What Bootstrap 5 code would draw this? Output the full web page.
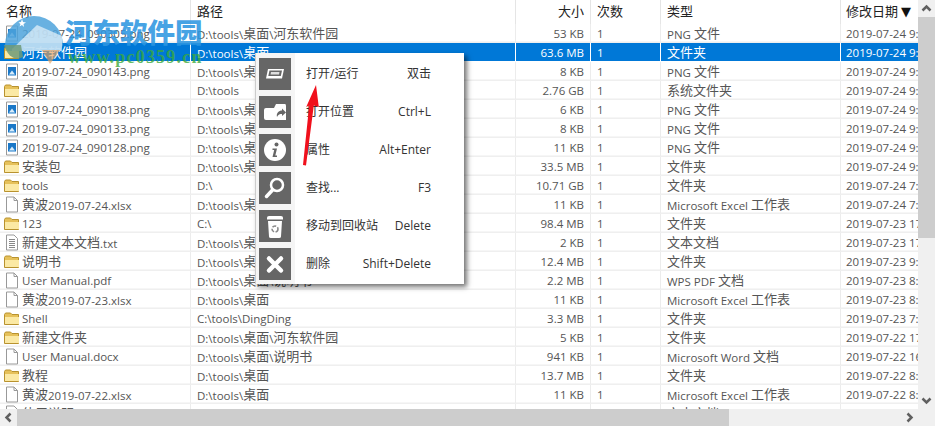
<!DOCTYPE html>
<html lang="zh-Hans">
<head>
<meta charset="UTF-8">
<title>Everything</title>
<link href="https://cdn.jsdelivr.net/npm/bootstrap@5.3.3/dist/css/bootstrap.min.css" rel="stylesheet">
<style>
  html, body { height: 100%; overflow: hidden; }
  body { background: #fff; color: #555; font: 11.5px/19px "Open Sans", "Noto Sans CJK SC", sans-serif; }
  .cjk-run { font-size: 13px; font-family: "Noto Sans CJK SC", sans-serif; }
  .data-row .cjk-run { position: relative; top: -1px; }
  .app-shell { width: 935px; height: 426px; position: relative; overflow: hidden; }
  .list-pane { width: 918px; height: 409px; overflow: hidden; }
  .cell { flex: none; padding-left: 6px; white-space: nowrap; overflow: hidden; border-right: 1px solid #ececec; }
  .c-name { width: 191px; padding-left: 22px; position: relative; }
  .c-path { width: 325px; }
  .c-size { width: 75px; padding: 0 6px 0 0; text-align: right; }
  .c-count { width: 70px; }
  .c-type { width: 180px; }
  .c-date { width: 77px; padding-left: 5px; border-right: 0; }
  .head-row { height: 24px; color: #222; line-height: 22px; }
  .head-row .cell { height: 24px; border-right-color: #e5e5e5; }
  .head-row .c-name { padding-left: 6px; }
  .head-row .c-date { padding-left: 5px; }
  .sort-mark { font: 13px "DejaVu Sans", sans-serif; color: #111; margin-left: 3px; }
  .data-row { height: 19px; border-bottom: 1px solid #efefef; box-shadow: inset 0 -1px 0 #f6f6f6; }
  .data-row .cell { height: 18px; }
  .data-row.picked { background: #0078d7; color: #fff; border-bottom-color: #fff; box-shadow: none; }
  .data-row.picked .cell { border-right-color: #fff; }
  .file-ico { position: absolute; left: 4px; top: 1px; width: 16px; height: 17px; }
  .bar-v { position: absolute; left: 918px; top: 0; width: 17px; height: 409px; background: #f0f0f0; }
  .thumb-v { position: absolute; left: 0; top: 17px; width: 17px; height: 221px; background: #cdcdcd; }
  .bar-h { position: absolute; left: 0; top: 409px; width: 935px; height: 17px; background: #f0f0f0; }
  .thumb-h { position: absolute; left: 17px; top: 0; width: 712px; height: 17px; background: #cdcdcd; }
  .arrow-ico { position: absolute; width: 17px; height: 17px; }
  .ctx-menu { position: absolute; left: 255px; top: 53px; width: 209px; height: 231px; background: #fff; box-shadow: 3px 3px 5px rgba(0,0,0,.55); border-left: 1px solid #ccc; color: #333; font: 12px/18px "Open Sans", "Noto Sans CJK SC", sans-serif; padding: 5px 0 0 3px; }
  .ctx-strip { position: absolute; left: 0; top: 0; width: 39px; height: 100%; background: #f5f5f5; }
  .ctx-item { height: 38px; position: relative; }
  .ctx-tile { flex: none; width: 32px; height: 32px; background: #666; margin-right: 15px; position: relative; }
  .ctx-label { flex: 1 1 auto; margin-top: 7px; position: relative; }
  .ctx-key { padding-right: 33px; margin-top: 7px; position: relative; }
  .red-arrow { position: absolute; left: 296px; top: 84px; width: 30px; height: 84px; }
  .wm-logo { position: absolute; left: 0; top: 5px; width: 70px; height: 60px; }
  .wm-title { position: absolute; left: 65px; top: 13px; font: 900 27.5px/36px "Noto Sans CJK SC", sans-serif; color: rgba(45,150,225,.88); }
  .wm-url { position: absolute; left: 68px; top: 47px; font: bold 18px/20px "Liberation Serif", serif; letter-spacing: 1.2px; color: rgba(60,170,60,.8); }
</style>
</head>
<body>
<div class="app-shell">
  <div class="list-pane" id="rows">
    <div class="d-flex head-row">
      <div class="cell c-name"><span class="cjk-run">名称</span></div>
      <div class="cell c-path"><span class="cjk-run">路径</span></div>
      <div class="cell c-size"><span class="cjk-run">大小</span></div>
      <div class="cell c-count"><span class="cjk-run">次数</span></div>
      <div class="cell c-type"><span class="cjk-run">类型</span></div>
      <div class="cell c-date"><span class="cjk-run">修改日期</span><span class="sort-mark">▼</span></div>
    </div>
  </div>

  <div class="bar-v">
    <div class="thumb-v"></div>
    <svg class="arrow-ico" style="left:0;top:0" viewBox="0 0 17 17"><path d="M4.5 10.500 8.500 6.500 12.500 10.500" fill="none" stroke="#606060" stroke-width="2.500"/></svg>
    <svg class="arrow-ico" style="left:0;top:392px" viewBox="0 0 17 17"><path d="M4.500 6.500 8.500 10.500 12.500 6.500" fill="none" stroke="#606060" stroke-width="2.500"/></svg>
  </div>
  <div class="bar-h">
    <svg class="arrow-ico" style="left:0;top:0" viewBox="0 0 17 17"><path d="M10.500 4.500 6.500 8.500 10.500 12.500" fill="none" stroke="#606060" stroke-width="2.500"/></svg>
    <div class="thumb-h"></div>
    <svg class="arrow-ico" style="left:901px;top:0" viewBox="0 0 17 17"><path d="M6.500 4.500 10.500 8.500 6.500 12.500" fill="none" stroke="#606060" stroke-width="2.500"/></svg>
  </div>

  <div class="ctx-menu">
    <div class="ctx-strip"></div>
    <div class="ctx-item d-flex">
      <svg class="ctx-tile" viewBox="0 0 32 32"><path d="M9 11H25L23 20.500H7Z" fill="#fff"/><path d="M10.500 12.500H23L21.800 18H9.300Z" fill="#666"/><path d="M12 14H20.500L20 16.500H11.500Z" fill="#ddd"/></svg>
      <span class="ctx-label">打开/运行</span><span class="ctx-key">双击</span>
    </div>
    <div class="ctx-item d-flex">
      <svg class="ctx-tile" viewBox="0 0 32 32"><path d="M5 14Q5 12 7 12H15L17 8H26Q27 8 27 10V24H7Q5 24 5 22Z" fill="#fff"/><path d="M18 21C17 17 20 14.500 23 14.500V12.500L27 16.500 23 20V18C21 18 19 18.500 18 21Z" fill="#666"/></svg>
      <span class="ctx-label">打开位置</span><span class="ctx-key">Ctrl+L</span>
    </div>
    <div class="ctx-item d-flex">
      <svg class="ctx-tile" viewBox="0 0 32 32"><circle cx="16" cy="16" r="11" fill="#fff"/><circle cx="17.500" cy="10.500" r="2" fill="#666"/><path d="M13.500 14.500H18L16.300 21.500H18V23H13.500L15.200 16H13.500Z" fill="#666"/></svg>
      <span class="ctx-label">属性</span><span class="ctx-key">Alt+Enter</span>
    </div>
    <div class="ctx-item d-flex">
      <svg class="ctx-tile" viewBox="0 0 32 32"><circle cx="18" cy="13" r="6" fill="none" stroke="#fff" stroke-width="2.500"/><path d="M13.500 18 7.500 24.500" stroke="#fff" stroke-width="3.500" stroke-linecap="round"/></svg>
      <span class="ctx-label">查找...</span><span class="ctx-key">F3</span>
    </div>
    <div class="ctx-item d-flex">
      <svg class="ctx-tile" viewBox="0 0 32 32"><path d="M8 7.500Q8 6 10 6H22Q24 6 24 7.500V9.500H8Z" fill="#fff"/><path d="M9 11H23L22 26.500Q22 28 20 28H12Q10 28 10 26.500Z" fill="#fff"/><circle cx="16" cy="19" r="3" fill="none" stroke="#888" stroke-width="1.500" stroke-dasharray="4 1.500"/></svg>
      <span class="ctx-label">移动到回收站</span><span class="ctx-key">Delete</span>
    </div>
    <div class="ctx-item d-flex">
      <svg class="ctx-tile" viewBox="0 0 32 32"><path d="M10 10.500 22 22.500M22 10.500 10 22.500" stroke="#fff" stroke-width="4.500" stroke-linecap="round"/></svg>
      <span class="ctx-label">删除</span><span class="ctx-key">Shift+Delete</span>
    </div>
  </div>

  <svg class="red-arrow" viewBox="0 0 30 84"><path d="M20 1 22.800 23 17.800 21.500 10 81.500 7 81 13.200 21.500 10.200 23Z" fill="#f0101c"/></svg>

  <svg class="wm-logo" viewBox="0 0 70 60">
    <path d="M5 40A29 29 0 0 1 63 40L60 46H8Z" fill="#4ea3dc" opacity=".85"/>
    <path d="M12 44 37 20 62 31V46H12Z" fill="#fff" opacity=".6"/>
    <path d="M22 14 23 17 26 17.500 23.500 19 24 22 22 20 19.500 21.500 20.500 19 18.500 17.500 21 17Z" fill="#fff"/>
    <path d="M42 45H60L50 59Z" fill="#e8a05a" opacity=".65"/>
    <path d="M4 40H21L23 52C15 56 8 52 4 40Z" fill="#6f9a78" opacity=".85"/>
  </svg>
  <div class="wm-title">河东软件园</div>
  <div class="wm-url">www.pc0359.cn</div>
</div>
<script>
const icons = {
  folder: '<path d="M.500 4 1.500 2.500H6.500L8 4H14.500V14H.500Z" fill="#e6c15a" stroke="#b8922e"/><path d="M1 6.500H15V13.500H1Z" fill="#fbe9a4"/>',
  png: '<path d="M2.500 .500H13.500V15.500H2.500Z" fill="#fff" stroke="#999"/><path d="M4 3.500H12V12H4Z" fill="#1a78c8"/><path d="M5 11 8 7 11 11Z" fill="#d8ecfa"/>',
  blank: '<path d="M2.500 .500H10L13.500 4V15.500H2.500Z" fill="#fff" stroke="#999"/><path d="M10 .500V4H13.500" fill="none" stroke="#999"/>',
  text: '<path d="M2.500 .500H10L13.500 4V15.500H2.500Z" fill="#fff" stroke="#999"/><path d="M5 5H11M5 7H11M5 9H11M5 11H11M5 13H11" stroke="#888"/>'
};
// 图标, 名称, 路径, 大小, 类型, 时间
const files = [
  ["png","2019-07-24_090305.png","D:\\tools\\桌面\\河东软件园","53 KB","PNG 文件","2019-07-24 9:05"],
  ["folder","河东软件园","D:\\tools\\桌面","63.6 MB","文件夹","2019-07-24 9:05"],
  ["png","2019-07-24_090143.png","D:\\tools\\桌面","8 KB","PNG 文件","2019-07-24 9:01"],
  ["folder","桌面","D:\\tools","2.76 GB","系统文件夹","2019-07-24 9:01"],
  ["png","2019-07-24_090138.png","D:\\tools\\桌面","6 KB","PNG 文件","2019-07-24 9:01"],
  ["png","2019-07-24_090133.png","D:\\tools\\桌面","8 KB","PNG 文件","2019-07-24 9:01"],
  ["png","2019-07-24_090128.png","D:\\tools\\桌面","11 KB","PNG 文件","2019-07-24 9:01"],
  ["folder","安装包","D:\\tools\\桌面","33.5 MB","文件夹","2019-07-24 9:00"],
  ["folder","tools","D:\\","10.71 GB","文件夹","2019-07-24 7:50"],
  ["blank","黄波2019-07-24.xlsx","D:\\tools\\桌面","11 KB","Microsoft Excel 工作表","2019-07-24 7:50"],
  ["folder","123","C:\\","98.4 MB","文件夹","2019-07-23 17:00"],
  ["text","新建文本文档.txt","D:\\tools\\桌面","2 KB","文本文档","2019-07-23 17:00"],
  ["folder","说明书","D:\\tools\\桌面","12.4 MB","文件夹","2019-07-23 9:00"],
  ["blank","User Manual.pdf","D:\\tools\\桌面\\说明书","2.2 MB","WPS PDF 文档","2019-07-23 8:50"],
  ["blank","黄波2019-07-23.xlsx","D:\\tools\\桌面","11 KB","Microsoft Excel 工作表","2019-07-23 8:10"],
  ["folder","Shell","C:\\tools\\DingDing","3.3 MB","文件夹","2019-07-23 7:50"],
  ["folder","新建文件夹","D:\\tools\\桌面\\河东软件园","5 KB","文件夹","2019-07-22 17:00"],
  ["blank","User Manual.docx","D:\\tools\\桌面\\说明书","941 KB","Microsoft Word 文档","2019-07-22 16:00"],
  ["folder","教程","D:\\tools\\桌面","13.7 MB","文件夹","2019-07-22 8:20"],
  ["blank","黄波2019-07-22.xlsx","D:\\tools\\桌面","11 KB","Microsoft Excel 工作表","2019-07-22 8:20"],
  ["text","使用说明","","","文本文档","2019-07-22 8:00"]
];
// 中文比西文大一号
const cjk = s => s.replace(/[\u4e00-\u9fff]+/g, '<span class="cjk-run">$&</span>');
document.getElementById("rows").insertAdjacentHTML("beforeend", files.map((f, i) =>
  `<div class="d-flex data-row${i === 1 ? " picked" : ""}">
    <div class="cell c-name"><svg class="file-ico" viewBox="0 0 16 16">${icons[f[0]]}</svg>${cjk(f[1])}</div>
    <div class="cell c-path">${cjk(f[2])}</div>
    <div class="cell c-size">${f[3]}</div>
    <div class="cell c-count">1</div>
    <div class="cell c-type">${cjk(f[4])}</div>
    <div class="cell c-date">${f[5]}</div>
  </div>`).join(""));
</script>
<script src="https://cdn.jsdelivr.net/npm/bootstrap@5.3.3/dist/js/bootstrap.bundle.min.js"></script>
</body>
</html>
